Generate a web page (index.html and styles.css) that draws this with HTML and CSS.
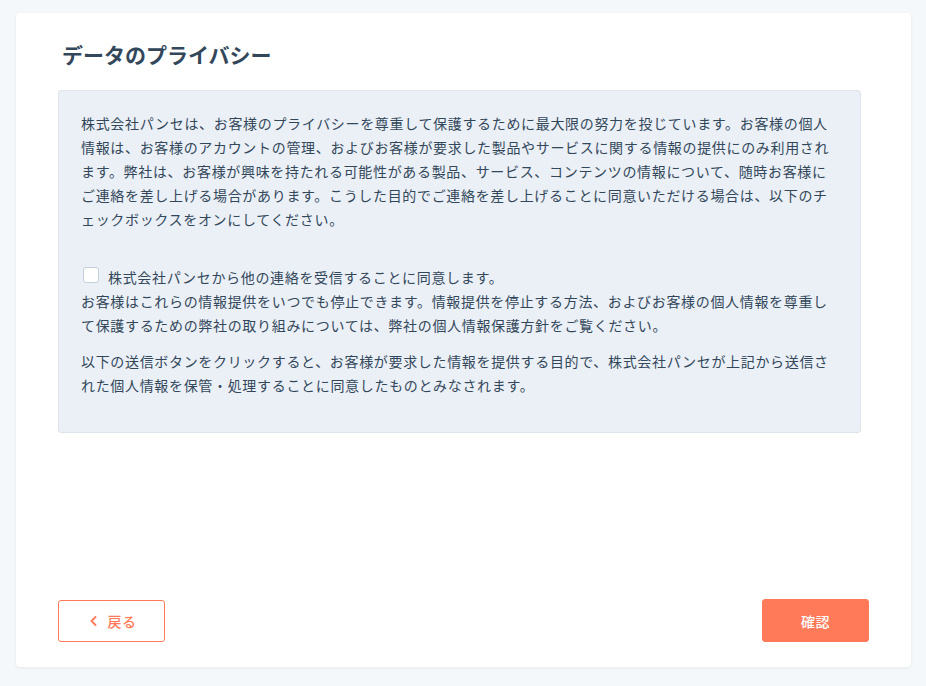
FILE: index.html
```html
<!DOCTYPE html>
<html lang="ja">
<head>
<meta charset="utf-8">
<title>データのプライバシー</title>
<link rel="stylesheet" href="styles.css">
</head>
<body>
<main class="card">
  <h1 class="title">データのプライバシー</h1>
  <section class="notice">
    <p class="para">株式会社パンセは、お客様のプライバシーを尊重して保護するために最大限の努力を投じています。お客様の個人情報は、お客様のアカウントの管理、およびお客様が要求した製品やサービスに関する情報の提供にのみ利用されます。弊社は、お客様が興味を持たれる可能性がある製品、サービス、コンテンツの情報について、随時お客様にご連絡を差し上げる場合があります。こうした目的でご連絡を差し上げることに同意いただける場合は、以下のチェックボックスをオンにしてください。</p>
    <label class="consent">
      <span class="checkbox"></span>
      <span class="consent-text">株式会社パンセから他の連絡を受信することに同意します。</span>
    </label>
    <p class="para">お客様はこれらの情報提供をいつでも停止できます。情報提供を停止する方法、およびお客様の個人情報を尊重して保護するための弊社の取り組みについては、弊社の個人情報保護方針をご覧ください。</p>
    <p class="para para-gap">以下の送信ボタンをクリックすると、お客様が要求した情報を提供する目的で、株式会社パンセが上記から送信された個人情報を保管・処理することに同意したものとみなされます。</p>
  </section>
  <div class="spacer"></div>
  <footer class="actions">
    <button class="btn btn-back" type="button">
      <svg class="chev" width="7" height="10" viewBox="0 0 7 10"><path d="M5.5 1 L1.5 5 L5.5 9" fill="none" stroke="#ff7a59" stroke-width="1.8" stroke-linecap="round" stroke-linejoin="round"/></svg>
      <span>戻る</span>
    </button>
    <button class="btn btn-primary" type="button">確認</button>
  </footer>
</main>
</body>
</html>
```
FILE: styles.css
```css
* { box-sizing: border-box; }
html, body { margin: 0; height: 100%; }
body {
  background: #f5f8fa;
  padding: 13px 15px 19px 16px;
  display: flex;
  flex-direction: column;
  font-family: "Noto Sans CJK JP", "Noto Sans", sans-serif;
  color: #33475b;
}
.card {
  flex: 1;
  background: #ffffff;
  border-radius: 4px;
  box-shadow: 0 1px 3px rgba(45, 62, 80, 0.08);
  padding: 26px 42px 25px 42px;
  display: flex;
  flex-direction: column;
}
.title {
  margin: 0 0 21px 4px;
  font-size: 21px;
  line-height: 30px;
  font-weight: 700;
  color: #33475b;
}
.notice {
  max-width: 803px;
  background: #eaf0f6;
  border: 1px solid #dfe3eb;
  border-radius: 3px;
  padding: 20px 23px 35px 22px;
  font-size: 14px;
  letter-spacing: 0.67px;
  line-height: 24px;
  line-break: normal;
}
.para { margin: 0; }
.para-gap { margin-top: 12px; }
.consent {
  display: flex;
  align-items: flex-start;
  margin: 35px 0 1px;
  line-height: 22px;
}
.checkbox {
  width: 16px;
  height: 16px;
  flex: none;
  background: #ffffff;
  border: 1px solid #c3ceda;
  border-radius: 3px;
  margin: 1px 9px 0 2px;
}
.spacer { flex: 1; }
.actions {
  display: flex;
  justify-content: space-between;
  align-items: center;
}
.btn {
  font-family: "Noto Sans CJK JP", "Noto Sans", sans-serif;
  font-size: 14px;
  font-weight: 500;
  letter-spacing: 0.5px;
  width: 107px;
  height: 42px;
  border-radius: 3px;
  display: flex;
  align-items: center;
  justify-content: center;
  cursor: pointer;
  padding: 0;
}
.btn-back {
  background: #ffffff;
  border: 1px solid #ff7a59;
  color: #ff7a59;
  gap: 11px;
  padding-left: 3px;
}
.chev { display: block; }
.btn-primary {
  background: #ff7a59;
  border: 1px solid #ff7a59;
  color: #ffffff;
  height: 43px;
}
```
